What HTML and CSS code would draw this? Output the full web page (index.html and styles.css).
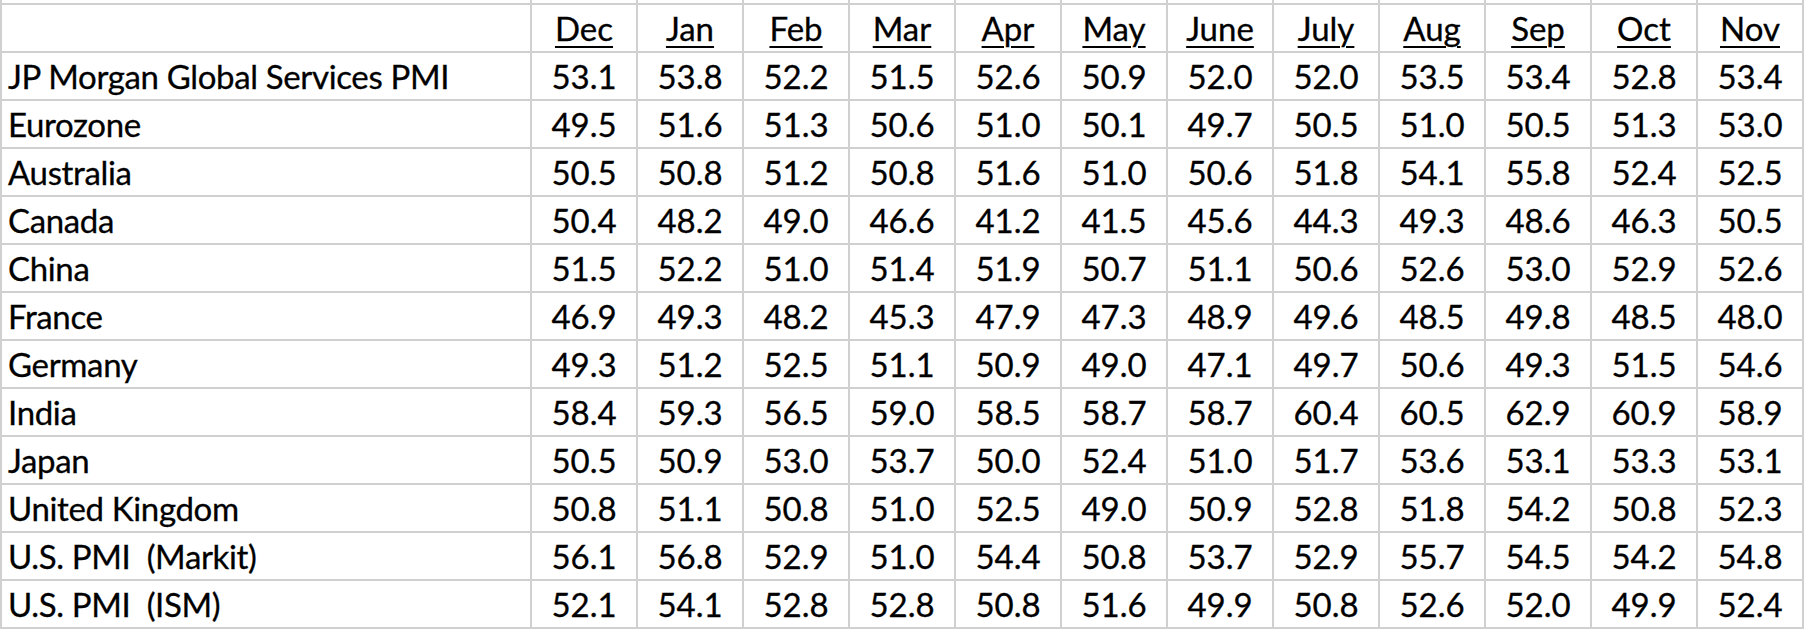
FILE: index.html
```html
<!DOCTYPE html>
<html>
<head>
<meta charset="utf-8">
<link rel="stylesheet" href="styles.css">
</head>
<body>
<div class="sheet">
  <div class="stub"></div><div class="stub"></div><div class="stub"></div><div class="stub"></div><div class="stub"></div><div class="stub"></div><div class="stub"></div><div class="stub"></div><div class="stub"></div><div class="stub"></div><div class="stub"></div><div class="stub"></div><div class="stub"></div>

  <div class="label"></div><div class="head"><span>Dec</span></div><div class="head"><span>Jan</span></div><div class="head"><span>Feb</span></div><div class="head"><span>Mar</span></div><div class="head"><span>Apr</span></div><div class="head"><span>May</span></div><div class="head"><span>June</span></div><div class="head"><span>July</span></div><div class="head"><span>Aug</span></div><div class="head"><span>Sep</span></div><div class="head"><span>Oct</span></div><div class="head"><span>Nov</span></div>

  <div class="label">JP Morgan Global Services PMI</div><div class="num">53.1</div><div class="num">53.8</div><div class="num">52.2</div><div class="num">51.5</div><div class="num">52.6</div><div class="num">50.9</div><div class="num">52.0</div><div class="num">52.0</div><div class="num">53.5</div><div class="num">53.4</div><div class="num">52.8</div><div class="num">53.4</div>

  <div class="label">Eurozone</div><div class="num">49.5</div><div class="num">51.6</div><div class="num">51.3</div><div class="num">50.6</div><div class="num">51.0</div><div class="num">50.1</div><div class="num">49.7</div><div class="num">50.5</div><div class="num">51.0</div><div class="num">50.5</div><div class="num">51.3</div><div class="num">53.0</div>

  <div class="label">Australia</div><div class="num">50.5</div><div class="num">50.8</div><div class="num">51.2</div><div class="num">50.8</div><div class="num">51.6</div><div class="num">51.0</div><div class="num">50.6</div><div class="num">51.8</div><div class="num">54.1</div><div class="num">55.8</div><div class="num">52.4</div><div class="num">52.5</div>

  <div class="label">Canada</div><div class="num">50.4</div><div class="num">48.2</div><div class="num">49.0</div><div class="num">46.6</div><div class="num">41.2</div><div class="num">41.5</div><div class="num">45.6</div><div class="num">44.3</div><div class="num">49.3</div><div class="num">48.6</div><div class="num">46.3</div><div class="num">50.5</div>

  <div class="label">China</div><div class="num">51.5</div><div class="num">52.2</div><div class="num">51.0</div><div class="num">51.4</div><div class="num">51.9</div><div class="num">50.7</div><div class="num">51.1</div><div class="num">50.6</div><div class="num">52.6</div><div class="num">53.0</div><div class="num">52.9</div><div class="num">52.6</div>

  <div class="label">France</div><div class="num">46.9</div><div class="num">49.3</div><div class="num">48.2</div><div class="num">45.3</div><div class="num">47.9</div><div class="num">47.3</div><div class="num">48.9</div><div class="num">49.6</div><div class="num">48.5</div><div class="num">49.8</div><div class="num">48.5</div><div class="num">48.0</div>

  <div class="label">Germany</div><div class="num">49.3</div><div class="num">51.2</div><div class="num">52.5</div><div class="num">51.1</div><div class="num">50.9</div><div class="num">49.0</div><div class="num">47.1</div><div class="num">49.7</div><div class="num">50.6</div><div class="num">49.3</div><div class="num">51.5</div><div class="num">54.6</div>

  <div class="label">India</div><div class="num">58.4</div><div class="num">59.3</div><div class="num">56.5</div><div class="num">59.0</div><div class="num">58.5</div><div class="num">58.7</div><div class="num">58.7</div><div class="num">60.4</div><div class="num">60.5</div><div class="num">62.9</div><div class="num">60.9</div><div class="num">58.9</div>

  <div class="label">Japan</div><div class="num">50.5</div><div class="num">50.9</div><div class="num">53.0</div><div class="num">53.7</div><div class="num">50.0</div><div class="num">52.4</div><div class="num">51.0</div><div class="num">51.7</div><div class="num">53.6</div><div class="num">53.1</div><div class="num">53.3</div><div class="num">53.1</div>

  <div class="label">United Kingdom</div><div class="num">50.8</div><div class="num">51.1</div><div class="num">50.8</div><div class="num">51.0</div><div class="num">52.5</div><div class="num">49.0</div><div class="num">50.9</div><div class="num">52.8</div><div class="num">51.8</div><div class="num">54.2</div><div class="num">50.8</div><div class="num">52.3</div>

  <div class="label">U.S. PMI  (Markit)</div><div class="num">56.1</div><div class="num">56.8</div><div class="num">52.9</div><div class="num">51.0</div><div class="num">54.4</div><div class="num">50.8</div><div class="num">53.7</div><div class="num">52.9</div><div class="num">55.7</div><div class="num">54.5</div><div class="num">54.2</div><div class="num">54.8</div>

  <div class="label">U.S. PMI  (ISM)</div><div class="num">52.1</div><div class="num">54.1</div><div class="num">52.8</div><div class="num">52.8</div><div class="num">50.8</div><div class="num">51.6</div><div class="num">49.9</div><div class="num">50.8</div><div class="num">52.6</div><div class="num">52.0</div><div class="num">49.9</div><div class="num">52.4</div>
</div>
</body>
</html>
```

FILE: styles.css
```css
html, body {
  margin: 0;
  padding: 0;
  background: #ffffff;
}

.sheet {
  display: grid;
  grid-template-columns: 528px repeat(12, 104px);
  grid-template-rows: 3px repeat(13, 46px);
  gap: 2px;
  padding: 0 2px 2px 2px;
  width: max-content;
  background: #d0d0d0;
  font-family: Lato, "Open Sans", "Noto Sans", sans-serif;
  font-size: 33px;
  color: #000000;
  -webkit-text-stroke: 0.3px #000000;
}

.sheet > div {
  background: #ffffff;
  line-height: 46px;
  white-space: pre;
  overflow: hidden;
}

.stub {
  height: 3px;
}

.label {
  text-align: left;
  padding-left: 6px;
  letter-spacing: -0.35px;
}

.num,
.head {
  text-align: center;
}

.head span {
  text-decoration: underline;
  text-decoration-thickness: 2px;
  text-underline-offset: 5px;
}
```
